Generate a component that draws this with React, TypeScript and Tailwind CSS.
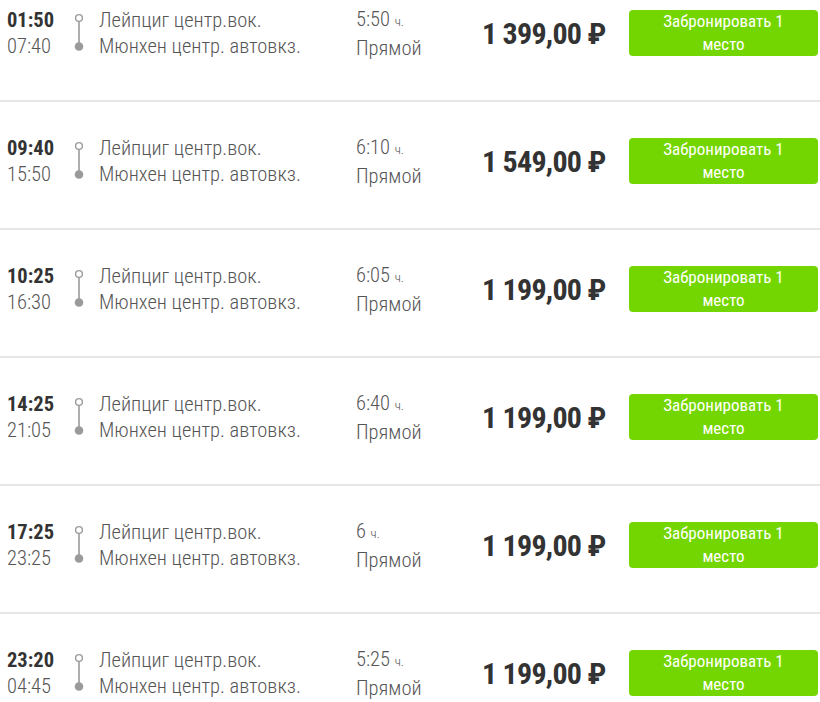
const TRIPS = [
  { dep: "01:50", arr: "07:40", dur: "5:50", price: "1 399,00" },
  { dep: "09:40", arr: "15:50", dur: "6:10", price: "1 549,00" },
  { dep: "10:25", arr: "16:30", dur: "6:05", price: "1 199,00" },
  { dep: "14:25", arr: "21:05", dur: "6:40", price: "1 199,00" },
  { dep: "17:25", arr: "23:25", dur: "6", price: "1 199,00" },
  { dep: "23:20", arr: "04:45", dur: "5:25", price: "1 199,00" },
];

const FONT = "font-['Roboto_Condensed','Liberation_Sans_Narrow','DejaVu_Sans_Condensed',Roboto,sans-serif]";

function RouteLine() {
  return (
    <svg width="12" height="40" viewBox="0 0 12 40" className="block">
      <circle cx="6" cy="5" r="3.4" fill="none" stroke="#9a9a9a" strokeWidth="1.4" />
      <line x1="6" y1="8.5" x2="6" y2="32" stroke="#9a9a9a" strokeWidth="1.6" />
      <circle cx="6" cy="33.5" r="4.3" fill="#9a9a9a" />
    </svg>
  );
}

export default function App() {
  return (
    <div className={`w-[820px] h-[702px] overflow-hidden bg-white ${FONT}`}>
      <div className="mt-[-26px]">
        {TRIPS.map((t) => (
          <div
            key={t.dep}
            className="flex items-center h-[128px] pb-[8px] border-b-2 border-[#e6e6e6]"
          >
            {/* times */}
            <div className="w-[73px] pl-[7px] text-[20.5px] leading-[26px]">
              <div className="font-bold text-[#333]">{t.dep}</div>
              <div className="font-light text-[#555]">{t.arr}</div>
            </div>
            {/* line */}
            <div className="w-[26px]">
              <RouteLine />
            </div>
            {/* stations */}
            <div className="w-[257px] text-[20.5px] leading-[26px] font-light text-[#555]">
              <div>Лейпциг центр.вок.</div>
              <div>Мюнхен центр. автовкз.</div>
            </div>
            {/* duration */}
            <div className="w-[126px] text-[20.5px] leading-[26px] font-light text-[#555]">
              <div>
                {t.dur} <span className="text-[13px]">ч.</span>
              </div>
              <div>Прямой</div>
            </div>
            {/* price */}
            <div className="w-[147px] text-[30px] font-bold text-[#333] tracking-tight">
              {t.price} ₽
            </div>
            {/* button */}
            <button className="w-[189px] h-[46px] rounded-[4px] bg-[#74d600] text-white text-[17px] leading-[23px] text-center">
              Забронировать 1
              <br />
              место
            </button>
          </div>
        ))}
      </div>
    </div>
  );
}
